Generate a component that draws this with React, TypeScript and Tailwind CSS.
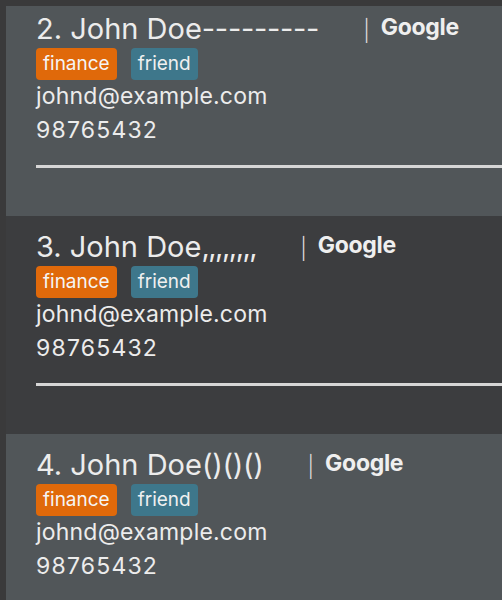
import React from 'react';

// Contact list cards, scrolled so the first card is partly hidden under the top edge.
type Person = { name: string; tail: string; tight?: boolean; light: boolean };

const people: Person[] = [
  { name: '2. John Doe', tail: '---------', light: true },
  { name: '3. John Doe', tail: ',,,,,,,,', tight: true, light: false },
  { name: '4. John Doe', tail: '()()()', light: true },
];

function Card({ p }: { p: Person }) {
  return (
    <div className={`h-[218px] pl-[30px] pt-[14px] ${p.light ? 'bg-[#515659]' : 'bg-[#3c3d3f]'}`}>
      <div className="flex items-center h-[34px]">
        <span className="text-[29px] leading-[34px] text-[#ececec] whitespace-nowrap">
          {p.name}
          <span className={p.tight ? 'tracking-[-1.5px]' : 'tracking-[-0.3px]'}>{p.tail}</span>
        </span>
        <span className="ml-[44px] text-[21px] leading-[24px] text-[#dcdcdc] font-light mt-[4px]">|</span>
        <span className="ml-[11px] text-[23px] leading-[26px] font-bold text-[#efefef] -mt-[4px] tracking-[-0.3px]">
          Google
        </span>
      </div>
      <div className="mt-[2px] flex gap-[14px]">
        <span className="h-[32px] rounded-[4px] bg-[#e0690a] px-[7px] text-[19px] leading-[32px] text-[#f5f5f5]">
          finance
        </span>
        <span className="h-[32px] rounded-[4px] bg-[#3e778b] px-[7px] text-[19px] leading-[32px] text-[#f0f0f0]">
          friend
        </span>
      </div>
      <div className="text-[23px] leading-[32px] text-[#ececec] tracking-[0.2px]">johnd@example.com</div>
      <div className="mt-[2px] text-[23px] leading-[32px] text-[#ececec] tracking-[1.2px]">98765432</div>
      <div className="mt-[19px] h-[3px] bg-[#d6d6d6]" />
    </div>
  );
}

export default function App() {
  return (
    <div
      className="h-[600px] w-[502px] overflow-hidden bg-[#3a3a3b] pl-[6px] pt-[6px]"
      style={{ fontFamily: 'Inter, "Noto Sans", sans-serif' }}
    >
      <div className="h-full overflow-hidden">
        <div className="-mt-[8px]">
          {people.map((p, i) => (
            <Card key={i} p={p} />
          ))}
        </div>
      </div>
    </div>
  );
}
